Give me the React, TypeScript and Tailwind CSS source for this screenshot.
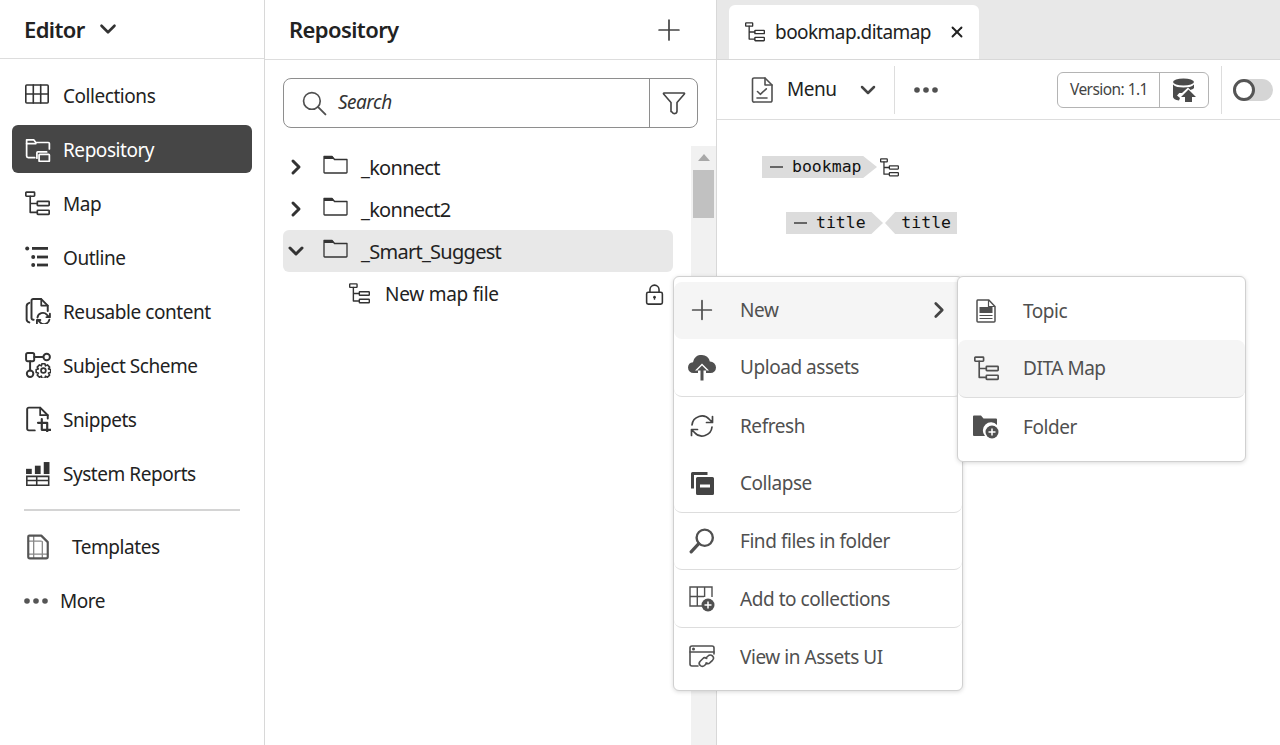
import React from "react";
import { ChevronDown, ChevronRight, Plus, X } from "lucide-react";

type IP = { className?: string };
const S = ({ className, children, vb = "0 0 24 24" }: IP & { children: React.ReactNode; vb?: string }) => (
  <svg viewBox={vb} fill="none" stroke="currentColor" strokeWidth={1.6} strokeLinecap="round" strokeLinejoin="round" className={className}>
    {children}
  </svg>
);

const MapIcon = ({ className }: IP) => (
  <S className={className}>
    <rect x="0.8" y="1" width="8.4" height="4" rx="0.6" />
    <rect x="11.8" y="10" width="11.4" height="4" rx="0.6" />
    <rect x="11.8" y="18.5" width="11.4" height="4" rx="0.6" />
    <path d="M5 5v15.5h6.8M5 12h6.8" />
  </S>
);
const GridIcon = ({ className }: IP) => (
  <S className={className}>
    <rect x="0.8" y="2" width="22.4" height="18" rx="1" />
    <path d="M8.3 2v18M15.7 2v18M0.8 11h22.4" />
  </S>
);
const RepoIcon = ({ className }: IP) => (
  <S className={className}>
    <path d="M9 20H3a1.5 1.5 0 0 1-1.5-1.5V3.500H8l2 2.500h11.500a1 1 0 0 1 1 1V12" />
    <path d="M1.500 7H10" />
    <rect x="13" y="17" width="9.500" height="6.500" rx="0.600" />
    <path d="M11 20.500V15.500a.8.8 0 0 1 .8-.8H20" />
  </S>
);
const OutlineIcon = ({ className }: IP) => (
  <svg viewBox="0 0 24 24" className={className} fill="currentColor">
    <circle cx="2.200" cy="3.500" r="2" />
    <circle cx="8.200" cy="12" r="2" />
    <circle cx="8.200" cy="20" r="2" />
    <rect x="7" y="2" width="16" height="2.800" />
    <rect x="12" y="10.600" width="11" height="2.800" />
    <rect x="12" y="18.600" width="11" height="2.800" />
  </svg>
);
const ReusableIcon = ({ className }: IP) => (
  <S className={className}>
    <path d="M4 4.500C2.500 5 1.500 6 1.500 7.500v12c0 1.500 1 2.500 2.500 3" strokeWidth={1.800} />
    <path d="M8 20H7.500A1.500 1.500 0 0 1 6 18.500v-16A1.500 1.500 0 0 1 7.500 1H15l6 6v5" strokeWidth={1.800} />
    <path d="M15 1v6h6" />
    <path d="M11.500 18a5 5 0 0 1 8.600-2.600l2 2M23 14.500v3.200h-3.200M22.500 20a5 5 0 0 1-8.600 2.400l-2-2M11 23.500v-3.200h3.200" strokeWidth={1.700} />
  </S>
);
const SchemeIcon = ({ className }: IP) => (
  <S className={className}>
    <rect x="1" y="1" width="7.500" height="7.500" rx="1.500" strokeWidth={1.800} />
    <circle cx="20" cy="4.700" r="3" strokeWidth={1.800} />
    <circle cx="4.700" cy="20" r="3" strokeWidth={1.800} />
    <path d="M8.500 4.700H17M4.700 8.500V17" strokeWidth={1.800} />
    <circle cx="17" cy="17" r="2.200" />
    <path d="M15.600 10.800h2.800l.5 2 1.800-.9 2 2-1 1.800 2 .5v2.800l-2 .5 1 1.800-2 2-1.800-1-.5 2h-2.800l-.5-2-1.800 1-2-2 1-1.800-2-.5v-2.800l2-.5-1-1.800 2-2 1.800.9z" strokeWidth={1.500} />
  </S>
);
const SnippetIcon = ({ className }: IP) => (
  <S className={className}>
    <path d="M9 22.500H3.500A1.500 1.500 0 0 1 2 21V3a1.500 1.500 0 0 1 1.500-1.500H14l7 7v3" strokeWidth={1.800} />
    <path d="M14 1.500v7h7" />
    <path d="M15.500 12v10h8.500M12 15.500h8.500V24" strokeWidth={2} />
  </S>
);
const ReportsIcon = ({ className }: IP) => (
  <svg viewBox="0 0 24 24" className={className} fill="currentColor">
    <rect x="1" y="7.500" width="5.500" height="5" />
    <rect x="9.500" y="4.500" width="5.500" height="8" />
    <rect x="18" y="1" width="5.500" height="11.500" />
    <path fillRule="evenodd" d="M1 14h22.500v10H1zM2.500 15.500v2.500h8v-2.500zm9.500 0v2.500h10v-2.500zM2.500 19.500v3h8v-3zm9.500 0v3h10v-3z" />
  </svg>
);
const TemplatesIcon = ({ className }: IP) => (
  <S className={className}>
    <path d="M4 1.500h11l6 6V21a1.500 1.500 0 0 1-1.500 1.500h-15A1.500 1.500 0 0 1 3 21V2.500a1 1 0 0 1 1-1z" strokeWidth={2} />
    <path d="M8 1.500v21M16 7v15.500M3 6.500h12M3 18.500h18" strokeWidth={1.200} opacity={0.7} />
  </S>
);
const FolderIcon = ({ className }: IP) => (
  <svg viewBox="0 0 25 20" className={className} fill="none" stroke="currentColor" strokeWidth={1.300}>
    <path d="M1 1.500v15.800a.7.7 0 0 0 .7.7h21.600a.7.7 0 0 0 .7-.7V4.500H11.500L9 1.500z" strokeLinejoin="round" />
    <path d="M1 1h8l2.500 3H1z" fill="currentColor" stroke="none" />
  </svg>
);
const SearchGlyph = ({ className }: IP) => (
  <S className={className}>
    <circle cx="9.500" cy="9.500" r="8" />
    <path d="M15.500 15.500l7 7" strokeWidth={1.800} />
  </S>
);
const FunnelGlyph = ({ className }: IP) => (
  <S className={className}>
    <path d="M2 2h20a.6.6 0 0 1 .4 1L15 11.500V20a2.600 2.600 0 0 1-5 1l-1-.5V11.500L1.600 3A.6.6 0 0 1 2 2z" />
  </S>
);
const LockIcon = ({ className }: IP) => (
  <svg viewBox="0 0 24 24" className={className} fill="none" stroke="currentColor" strokeWidth={1.800}>
    <rect x="3" y="9.500" width="18" height="13.500" rx="1.800" />
    <path d="M6.800 9.500V6.500a5.200 5.200 0 0 1 10.400 0v3" />
    <circle cx="12" cy="15" r="1.500" fill="currentColor" stroke="none" />
    <path d="M12 15v3" strokeWidth={1.500} />
  </svg>
);
const DocCheckIcon = ({ className }: IP) => (
  <S className={className} vb="0 0 22 26">
    <path d="M3 1h11l7 7v15.500a1.500 1.500 0 0 1-1.500 1.500h-16A1.500 1.500 0 0 1 1.500 23.500v-21A1.500 1.500 0 0 1 3 1z" />
    <path d="M14 1v7h7" />
    <path d="M6.500 14.500l2.800 2.800 6-5.500M6 21h10" />
  </S>
);
const DbUploadIcon = ({ className }: IP) => (
  <svg viewBox="0 0 24 24" className={className} fill="currentColor">
    <ellipse cx="11.500" cy="4" rx="10.500" ry="3.500" />
    <path d="M1 6.500c2 2.400 6 3 10.500 3s8.500-.6 10.500-3V10c-1 1-2 1.500-3.500 2L16 9.500 10 15H1zM1 12c1 1.500 3 2.300 6.500 2.800L5 17.500l3 2.500-1 2.500C3.500 22 1 20.500 1 19z" />
    <path d="M16.500 11.500L24 19h-4v5h-7v-5H9z" />
  </svg>
);
const CloudUp = ({ className }: IP) => (
  <svg viewBox="0 0 28 26" className={className} fill="currentColor">
    <path d="M14 0a8 8 0 0 1 7.800 6.500A6 6 0 0 1 28 12.500 5.500 5.500 0 0 1 22.500 18H18v-2.500h3L14 8.500l-7 7h3V18H5.500A5.500 5.500 0 0 1 0 12.500 5.500 5.500 0 0 1 5 7.200 8 8 0 0 1 14 0z" />
    <path d="M14 10.500l5 5h-3.500v10h-3v-10H9z" />
  </svg>
);
const RefreshIcon = ({ className }: IP) => (
  <S className={className}>
    <path d="M2 11a10 10 0 0 1 17.500-5.500L22 8M22.500 2.500V8.500H16.500" strokeWidth={1.700} />
    <path d="M22 13a10 10 0 0 1-17.500 5.500L2 16M1.500 21.500V15.500H7.500" strokeWidth={1.700} />
  </S>
);
const CollapseIcon = ({ className }: IP) => (
  <svg viewBox="0 0 24 24" className={className} fill="currentColor">
    <path d="M1 2.500A1.500 1.500 0 0 1 2.500 1h15v3H4v13.500H1z" />
    <path fillRule="evenodd" d="M6 7.500A1.500 1.500 0 0 1 7.500 6h15A1.500 1.500 0 0 1 24 7.500v15a1.500 1.500 0 0 1-1.500 1.500h-15A1.500 1.500 0 0 1 6 22.500zM10 13.500v3h10v-3z" />
  </svg>
);
const FindIcon = ({ className }: IP) => (
  <S className={className}>
    <circle cx="14.500" cy="9" r="7.500" strokeWidth={2.200} />
    <path d="M9 14.500L2 22" strokeWidth={3} />
  </S>
);
const AddCollIcon = ({ className }: IP) => (
  <svg viewBox="0 0 26 26" className={className}>
    <g fill="none" stroke="currentColor" strokeWidth={1.400}>
      <path d="M14 20H1V1h22v10M8.300 1v19M15.600 1v10M1 10.500h14" />
    </g>
    <circle cx="19" cy="19" r="6.500" fill="currentColor" />
    <path d="M19 15.500v7M15.500 19h7" stroke="white" strokeWidth={1.500} />
  </svg>
);
const AssetsIcon = ({ className }: IP) => (
  <S className={className} vb="0 0 26 24">
    <path d="M9 21H3a2 2 0 0 1-2-2V3a2 2 0 0 1 2-2h20a2 2 0 0 1 2 2v6" />
    <path d="M1 7h24" />
    <circle cx="4.500" cy="4" r="0.700" fill="currentColor" />
    <path d="M17 13l2-2a3 3 0 0 1 4.500 4.300l-2.500 2.400a3 3 0 0 1-4 .3" />
    <path d="M18 18l-2.500 2.500a3 3 0 0 1-4.300-4.300l2.500-2.500a3 3 0 0 1 4-.2" />
  </S>
);
const TopicIcon = ({ className }: IP) => (
  <svg viewBox="0 0 20 24" className={className}>
    <path d="M1.800 1h11L19 7.500V22a1 1 0 0 1-1 1H2a1 1 0 0 1-1-1V2a1 1 0 0 1 .8-1z" fill="none" stroke="currentColor" strokeWidth={1.500} />
    <path d="M12.500 1v6.500H19" fill="none" stroke="currentColor" strokeWidth={1.200} />
    <rect x="3.500" y="8" width="13" height="6" fill="currentColor" />
    <path d="M3.500 16.500h13M3.500 19.500h13" stroke="currentColor" strokeWidth={1.200} />
  </svg>
);
const FolderAdd = ({ className }: IP) => (
  <svg viewBox="0 0 26 24" className={className}>
    <path d="M0 1.500A1 1 0 0 1 1 .5h7l2.500 3H23a1 1 0 0 1 1 1V10a8 8 0 0 0-12 11H1a1 1 0 0 1-1-1z" fill="currentColor" />
    <circle cx="19" cy="17" r="6.500" fill="currentColor" />
    <path d="M19 13.500v7M15.500 17h7" stroke="white" strokeWidth={1.500} />
  </svg>
);

const font = "font-['Noto_Sans',sans-serif]";

const NavItem = ({ icon, label, active, gap = "gap-[14px]", low = true }: { icon: React.ReactNode; label: string; active?: boolean; gap?: string; low?: boolean }) => (
  <div className={`flex h-[48px] items-center ${gap} rounded-[6px] pl-[13px] text-[19px] tracking-[-0.45px] ${active ? "bg-[#464646] text-white" : "text-[#222222]"}`}>
    {icon}
    <span className={low ? "pt-[2px]" : ""}>{label}</span>
  </div>
);

const TreeRow = ({ label, open, sel }: { label: string; open?: boolean; sel?: boolean }) => (
  <div className={`flex h-[42px] items-center rounded-[6px] ${sel ? "bg-[#e8e8e8]" : ""}`}>
    <span className="flex w-[26px] justify-center">
      {open ? <ChevronDown className="h-[24px] w-[24px] text-[#333333]" strokeWidth={3} /> : <ChevronRight className="h-[24px] w-[24px] text-[#333333]" strokeWidth={3} />}
    </span>
    <FolderIcon className="ml-[14px] mb-[4px] h-[20px] w-[25px] text-[#333333]" />
    <span className="ml-[13px] pt-[2px] text-[20px] tracking-[-0.72px] text-[#222222]">{label}</span>
  </div>
);

const MenuRow = ({ icon, label, cls = "", chevron, sub }: { icon: React.ReactNode; label: string; cls?: string; chevron?: boolean; sub?: boolean }) => (
  <div className={`flex h-[57.800px] items-center rounded-[8px] ${cls}`}>
    <span className="flex w-[56px] justify-center">{icon}</span>
    <span className={`${sub ? "ml-[9px]" : "ml-[10px]"} text-[19px] tracking-[-0.45px] text-[#505050]`}>{label}</span>
    {chevron && <ChevronRight className="ml-auto mr-[10px] h-[26px] w-[26px] text-[#444444]" strokeWidth={2.500} />}
  </div>
);

const Dots = ({ className }: IP) => (
  <svg viewBox="0 0 24 6" className={className} fill="currentColor">
    <circle cx="3" cy="3" r="2.800" />
    <circle cx="12" cy="3" r="2.800" />
    <circle cx="21" cy="3" r="2.800" />
  </svg>
);

export default function App() {
  const ic = "h-[24px] w-[24px] text-[#444444]";
  return (
    <div className={`relative flex h-[745px] w-[1280px] overflow-hidden bg-white ${font}`}>
      {/* Left nav */}
      <aside className="flex w-[265px] shrink-0 flex-col border-r border-[#d8d8d8]">
        <div className="flex h-[59px] items-center gap-[11px] border-b border-[#dddddd] pl-[24px]">
          <span className="text-[22px] font-semibold tracking-[-0.6px] text-[#222222]">Editor</span>
          <ChevronDown className="-ml-[1px] h-[26px] w-[26px] text-[#333333]" strokeWidth={2.400} />
        </div>
        <nav className="flex flex-col gap-[6px] px-[12px] pt-[12px]">
          <NavItem icon={<GridIcon className="h-[24px] w-[24px] text-[#333333]" />} label="Collections" />
          <NavItem active icon={<RepoIcon className="h-[26px] w-[26px] text-white" />} label="Repository" gap="gap-[12px]" />
          <NavItem icon={<MapIcon className="h-[25px] w-[25px] text-[#333333]" />} label="Map" gap="gap-[13px]" />
          <NavItem icon={<OutlineIcon className="h-[24px] w-[24px] text-[#333333]" />} label="Outline" />
          <NavItem icon={<ReusableIcon className="h-[26px] w-[26px] text-[#333333]" />} label="Reusable content" gap="gap-[12px]" />
          <NavItem icon={<SchemeIcon className="h-[26px] w-[26px] text-[#333333]" />} label="Subject Scheme" gap="gap-[12px]" />
          <NavItem icon={<SnippetIcon className="h-[26px] w-[26px] text-[#333333]" />} label="Snippets" gap="gap-[12px]" />
          <NavItem icon={<ReportsIcon className="h-[25px] w-[25px] text-[#333333]" />} label="System Reports" gap="gap-[13px]" />
        </nav>
        <div className="mx-[24px] mt-[12px] h-[2px] bg-[#d4d4d4]" />
        <div className="flex flex-col gap-[6px] px-[12px] pt-[12px]">
          <NavItem low={false} icon={<TemplatesIcon className="h-[26px] w-[26px] text-[#555555]" />} label="Templates" gap="gap-[21px]" />
          <div className="flex h-[48px] items-center gap-[12px] pl-[12px] text-[19px] tracking-[-0.45px] text-[#222222]">
            <Dots className="h-[6px] w-[24px] text-[#555555]" />
            <span>More</span>
          </div>
        </div>
      </aside>

      {/* Repository */}
      <section className="flex w-[452px] shrink-0 flex-col border-r border-[#d8d8d8]">
        <div className="flex h-[60px] shrink-0 items-center justify-between border-b border-[#dddddd] pl-[24px] pr-[30px]">
          <span className="text-[22px] font-semibold tracking-[-0.6px] text-[#222222]">Repository</span>
          <Plus className="h-[34px] w-[34px] text-[#444444]" strokeWidth={1.200} />
        </div>
        <div className="mx-[18px] mt-[18px] flex h-[50px] shrink-0 items-stretch rounded-[8px] border border-[#8e8e8e]">
          <div className="flex flex-1 items-center pl-[18px]">
            <SearchGlyph className="h-[25px] w-[25px] text-[#505050]" />
            <span className="ml-[11px] pb-[2px] text-[19px] italic tracking-[-0.5px] text-[#333333]">Search</span>
          </div>
          <div className="flex w-[48px] items-center justify-center border-l border-[#8e8e8e]">
            <FunnelGlyph className="h-[24px] w-[24px] text-[#444444]" />
          </div>
        </div>
        <div className="flex min-h-0 flex-1 pt-[18px]">
          <div className="ml-[18px] w-[390px]">
            <TreeRow label="_konnect" />
            <TreeRow label="_konnect2" />
            <TreeRow label="_Smart_Suggest" open sel />
            <div className="flex h-[42px] items-center pl-[66px] pr-[7px]">
              <MapIcon className="h-[21px] w-[21px] text-[#333333]" />
              <span className="ml-[15px] pt-[2px] text-[19px] tracking-[-0.25px] text-[#222222]">New map file</span>
              <LockIcon className="ml-auto mt-[2px] h-[21px] w-[21px] -translate-x-[1px] text-[#333333]" />
            </div>
          </div>
          <div className="ml-[18px] flex w-[25px] flex-col items-center bg-[#f1f1f1] pt-[8px]">
            <div className="h-0 w-0 border-x-[6px] border-b-[7px] border-x-transparent border-b-[#a8a8a8]" />
            <div className="mt-[9px] h-[48px] w-[21px] bg-[#c1c1c1]" />
          </div>
        </div>
      </section>

      {/* Editor */}
      <main className="flex min-w-0 flex-1 flex-col">
        <div className="flex h-[60px] shrink-0 items-end border-b border-[#d8d8d8] bg-[#e8e8e8] pl-[12px]">
          <div className="flex h-[54px] w-[250px] items-center rounded-t-[6px] bg-white pl-[16px]">
            <MapIcon className="h-[20px] w-[20px] text-[#333333]" />
            <span className="ml-[10px] text-[19px] tracking-[-0.55px] text-[#222222]">bookmap.ditamap</span>
            <X className="ml-[17px] h-[18px] w-[18px] text-[#222222]" strokeWidth={2.500} />
          </div>
        </div>
        <div className="flex h-[60px] shrink-0 items-center border-b border-[#dddddd]">
          <DocCheckIcon className="ml-[34px] h-[26px] w-[22px] text-[#505050]" />
          <span className="ml-[14px] text-[19px] tracking-[-0.5px] text-[#222222]">Menu</span>
          <ChevronDown className="ml-[20px] h-[24px] w-[24px] text-[#444444]" strokeWidth={2.500} />
          <div className="ml-[14px] h-[48px] w-px bg-[#dddddd]" />
          <Dots className="ml-[19px] h-[6px] w-[24px] text-[#505050]" />
          <div className="ml-[119px] flex h-[36px] items-stretch rounded-[6px] border border-[#b4b4b4]">
            <span className="flex w-[102px] items-center justify-center border-r border-[#b4b4b4] text-[15.500px] tracking-[-0.55px] text-[#444444]">Version: 1.1</span>
            <span className="flex w-[48px] items-center justify-center">
              <DbUploadIcon className="h-[24px] w-[24px] text-[#4b4b4b]" />
            </span>
          </div>
          <div className="ml-[12px] h-[48px] w-px bg-[#dddddd]" />
          <div className="relative ml-[11px] h-[22px] w-[40px] rounded-full bg-[#d5d5d5]">
            <div className="h-[22px] w-[22px] rounded-full border-[3px] border-[#555555] bg-white" />
          </div>
        </div>
        <div className="flex-1 pl-[45px] pt-[36px] font-['DejaVu_Sans_Mono',monospace] text-[16.500px] text-[#111111]">
          <div className="flex h-[22px] items-center">
            <span className="flex h-[22px] w-[115px] items-center bg-[#dcdcdc] pl-[8px] [clip-path:polygon(0_0,88%_0,100%_50%,88%_100%,0_100%)]">
              <span className="mr-[9px] h-[2px] w-[13px] bg-[#666666]" />
              bookmap
            </span>
            <MapIcon className="ml-[3px] h-[19px] w-[19px] text-[#333333]" />
          </div>
          <div className="mt-[34px] ml-[24px] flex h-[22px] items-center">
            <span className="flex h-[22px] w-[97px] items-center bg-[#dcdcdc] pl-[8px] [clip-path:polygon(0_0,88%_0,100%_50%,88%_100%,0_100%)]">
              <span className="mr-[9px] h-[2px] w-[13px] bg-[#666666]" />
              title
            </span>
            <span className="ml-[2px] flex h-[22px] w-[72px] items-center justify-end bg-[#dcdcdc] pr-[6px] [clip-path:polygon(14%_0,100%_0,100%_100%,14%_100%,0_50%)]">title</span>
          </div>
        </div>
      </main>

      {/* Context menu */}
      <div className="absolute left-[673px] top-[276px] h-[415px] w-[290px] rounded-[6px] border border-[#d0d0d0] bg-white pt-[4.500px] shadow-[0_1px_4px_rgba(0,0,0,0.15)]">
        <MenuRow cls="bg-[#f5f5f5] rounded-r-none" chevron icon={<Plus className="h-[32px] w-[32px] text-[#505050]" strokeWidth={1.300} />} label="New" />
        <MenuRow cls="border-b border-[#dddddd]" icon={<CloudUp className="h-[26px] w-[28px] text-[#505050]" />} label="Upload assets" />
        <MenuRow icon={<RefreshIcon className={ic} />} label="Refresh" />
        <MenuRow cls="border-b border-[#dddddd]" icon={<CollapseIcon className={ic} />} label="Collapse" />
        <MenuRow cls="border-b border-[#dddddd]" icon={<FindIcon className="h-[26px] w-[26px] text-[#505050]" />} label="Find files in folder" />
        <MenuRow cls="border-b border-[#dddddd]" icon={<AddCollIcon className="h-[26px] w-[26px] text-[#505050]" />} label="Add to collections" />
        <MenuRow icon={<AssetsIcon className="h-[24px] w-[26px] text-[#505050]" />} label="View in Assets UI" />
      </div>

      {/* Sub menu */}
      <div className="absolute left-[957px] top-[276px] h-[186px] w-[289px] rounded-[6px] border border-[#d0d0d0] bg-white pt-[5.500px] shadow-[0_1px_4px_rgba(0,0,0,0.15)]">
        <MenuRow sub icon={<TopicIcon className="h-[24px] w-[20px] text-[#505050]" />} label="Topic" />
        <MenuRow sub cls="bg-[#f5f5f5] border-b border-[#dddddd]" icon={<MapIcon className="h-[25px] w-[25px] text-[#505050]" />} label="DITA Map" />
        <MenuRow sub icon={<FolderAdd className="h-[24px] w-[26px] text-[#505050]" />} label="Folder" />
      </div>
    </div>
  );
}
